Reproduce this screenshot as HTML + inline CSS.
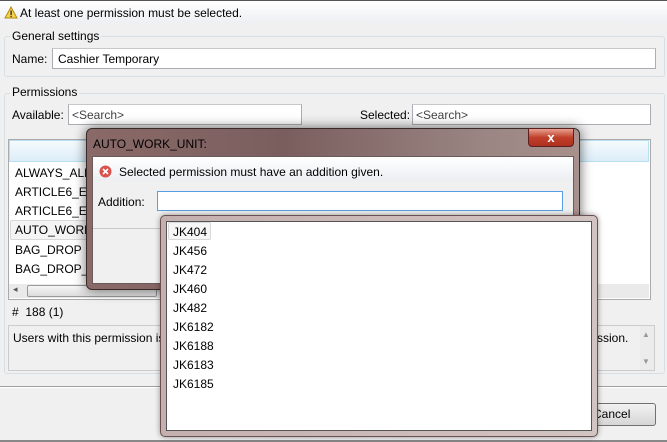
<!DOCTYPE html>
<html><head><style>
*{box-sizing:border-box;margin:0;padding:0}
body{width:667px;height:442px;background:#f0f0f0;font-family:"Liberation Sans",sans-serif;font-size:12px;color:#000;position:relative;overflow:hidden}
.a{position:absolute;white-space:nowrap}
.inp{position:absolute;background:#fff;border:1px solid #abadb3;border-top-color:#c6c8cc}
.grp{position:absolute;border:1px solid #d5dfe5;border-radius:3px}
.leg{position:absolute;background:#f0f0f0;padding:0 2px}
</style></head><body>
<div class="a" style="left:0;top:0;width:667px;height:22px;background:linear-gradient(#fff,#eef0f3);border-top:1px solid #555"></div>
<svg class="a" style="left:4px;top:6px" width="14" height="13"><path d="M7 1 L13 12 L1 12 Z" fill="#f6d24a" stroke="#b58a10"/><rect x="6.4" y="4.5" width="1.4" height="4.5" fill="#333"/><rect x="6.4" y="9.8" width="1.4" height="1.3" fill="#333"/></svg>
<div class="a" style="left:20px;top:6px">At least one permission must be selected.</div>

<div class="grp" style="left:4px;top:36px;width:661px;height:41px"></div>
<div class="leg a" style="left:10px;top:29px">General settings</div>
<div class="a" style="left:12px;top:52px">Name:</div>
<div class="inp" style="left:52px;top:48px;width:604px;height:21px;padding:3px 5px">Cashier Temporary</div>

<div class="grp" style="left:4px;top:93px;width:661px;height:281px"></div>
<div class="leg a" style="left:10px;top:85px">Permissions</div>
<div class="a" style="left:12px;top:108px">Available:</div>
<div class="inp" style="left:68px;top:104px;width:234px;height:21px;padding:3px 3px;color:#444">&lt;Search&gt;</div>
<div class="a" style="left:360px;top:108px">Selected:</div>
<div class="inp" style="left:412px;top:104px;width:239px;height:21px;padding:3px 3px;color:#444">&lt;Search&gt;</div>

<div class="a" style="left:8px;top:139px;width:643px;height:161px;background:#fff;border:1px solid #aaa"></div>
<div class="a" style="left:9px;top:140px;width:640px;height:22px;background:linear-gradient(#f5fbfe,#dcedf8);border:1px solid #b9dff3"></div>
<div class="a" style="left:15px;top:166px">ALWAYS_ALL</div>
<div class="a" style="left:15px;top:185px">ARTICLE6_EX</div>
<div class="a" style="left:15px;top:204px">ARTICLE6_EX</div>
<div class="a" style="left:10px;top:220px;width:90px;height:20px;border:1px solid #d8d8d8;border-radius:2px;background:#f4f4f4"></div>
<div class="a" style="left:15px;top:223px">AUTO_WORK</div>
<div class="a" style="left:15px;top:243px">BAG_DROP</div>
<div class="a" style="left:15px;top:262px">BAG_DROP_A</div>
<div class="a" style="left:9px;top:284px;width:640px;height:14px;background:#eaeaea"></div>
<div class="a" style="left:27px;top:285px;width:130px;height:12px;background:linear-gradient(#f6f6f6,#dcdcdc);border:1px solid #999;border-radius:2px"></div>
<div class="a" style="left:13px;top:284px;font-size:9px;color:#555">◂</div>

<div class="a" style="left:12px;top:305px">#&nbsp; 188 (1)</div>
<div class="a" style="left:8px;top:325px;width:647px;height:46px;border:1px solid #ccc;background:#f0f0f0"></div>
<div class="a" style="left:13px;top:331px">Users with this permission is</div>
<div class="a" style="left:597px;top:331px">ssion.</div>
<div class="a" style="left:640px;top:326px;width:14px;height:44px;background:#ececec"></div>
<div class="a" style="left:642px;top:330px;font-size:8px;color:#999">▲</div>
<div class="a" style="left:642px;top:357px;font-size:8px;color:#999">▼</div>

<div class="a" style="left:0;top:386px;width:667px;height:1px;background:#a0a0a0"></div>
<div class="a" style="left:0;top:387px;width:667px;height:1px;background:#fff"></div>
<div class="a" style="left:570px;top:403px;width:86px;height:23px;border:1px solid #707070;border-radius:3px;background:linear-gradient(#f2f2f2,#d6d6d6)"></div>
<div class="a" style="left:593px;top:407px">Cancel</div>
<div class="a" style="left:0;top:440px;width:667px;height:2px;background:#888"></div>

<!-- dialog -->
<div class="a" style="left:86px;top:128px;width:494px;height:162px;border-radius:6px;background:linear-gradient(90deg,#8a6a68,#7a5e5e 40%,#9a8582 80%,#a8908c);border:1px solid #3a2a2a;box-shadow:0 0 12px rgba(0,0,0,.6)"></div>
<div class="a" style="left:93px;top:137px;color:#000">AUTO_WORK_UNIT:</div>
<div class="a" style="left:528px;top:128px;width:46px;height:19px;border-radius:0 0 4px 4px;background:linear-gradient(#e8a090,#c0402a 50%,#b03020);border:1px solid #5a2020;color:#fff;text-align:center;font-weight:bold;font-size:13px;line-height:17px">x</div>
<div class="a" style="left:92px;top:156px;width:482px;height:128px;background:#f0f0f0;border:1px solid #6a5a5a"></div>
<div class="a" style="left:93px;top:157px;width:480px;height:24px;background:linear-gradient(#fff,#eceef2)"></div>
<svg class="a" style="left:99px;top:165px" width="13" height="13"><circle cx="6.5" cy="6.5" r="6" fill="#d9534f"/><path d="M4 4 L9 9 M9 4 L4 9" stroke="#fff" stroke-width="1.6"/></svg>
<div class="a" style="left:119px;top:165px">Selected permission must have an addition given.</div>
<div class="a" style="left:98px;top:195px">Addition:</div>
<div class="inp" style="left:157px;top:191px;width:406px;height:20px;border-color:#569de5"></div>
<div class="a" style="left:93px;top:228px;width:480px;height:1px;background:#c8c8c8"></div>

<!-- popup -->
<div class="a" style="left:160px;top:215px;width:438px;height:222px;border-radius:5px;background:linear-gradient(90deg,#c4b0ae,#d2c4c2);border:1px solid #6a5050;box-shadow:0 0 6px rgba(0,0,0,.4)"></div>
<div class="a" style="left:166px;top:221px;width:426px;height:210px;background:#fff;border:1px solid #555"></div>
<div class="a" style="left:168px;top:222px;width:43px;height:18px;border:1px solid #d8d8d8;border-radius:2px;background:#f6f6f6"></div>
<div class="a" style="left:173px;top:223px;line-height:19px">JK404<br>JK456<br>JK472<br>JK460<br>JK482<br>JK6182<br>JK6188<br>JK6183<br>JK6185</div>
</body></html>
